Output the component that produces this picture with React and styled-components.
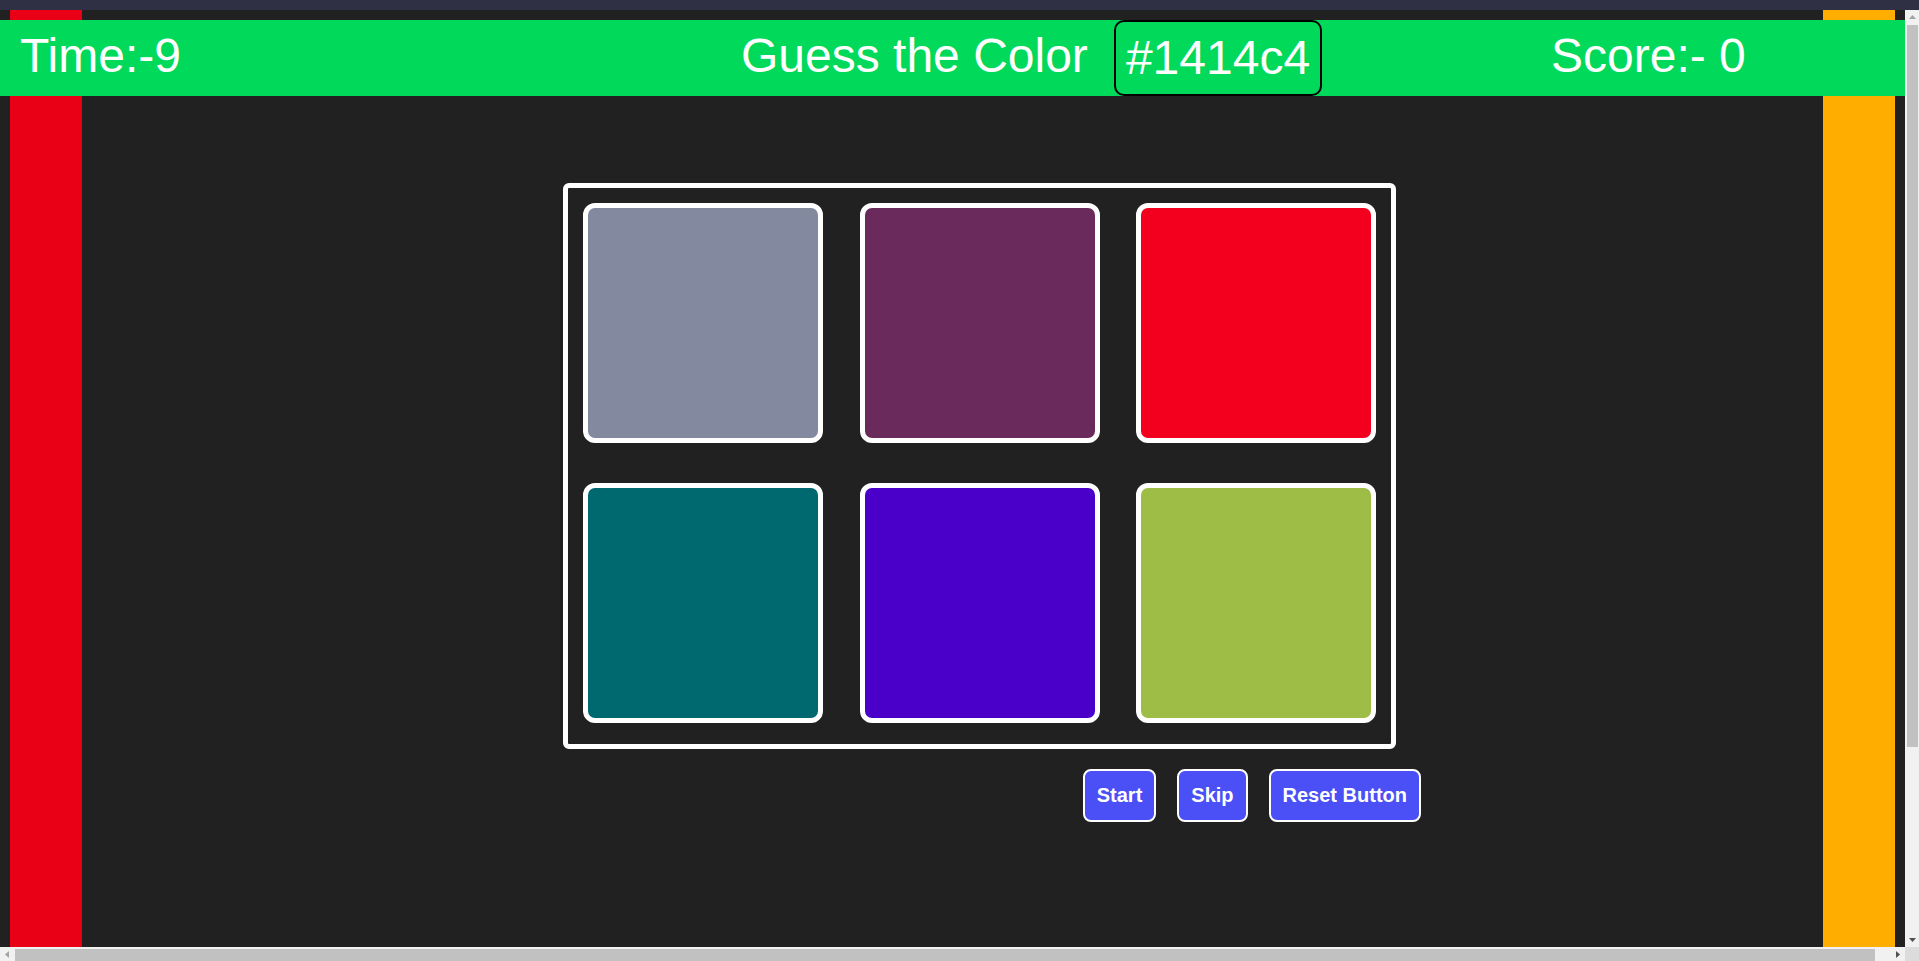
import React from 'react'
import styled, { createGlobalStyle } from 'styled-components'

const COLORS = {
  chrome: '#2f3044',
  background: '#212121',
  left: '#e90017',
  right: '#ffae00',
  header: '#00d95a',
  button: '#4a4ff6',
  track: '#f1f1f1',
  thumb: '#c1c1c1',
  corner: '#dcdcdc'
}

const TILES = ['#838aa0', '#6a2b5c', '#f4001f', '#006970', '#4a00c8', '#9ebd46']

const ARROWS = {
  up: '0,4 3.5,0 7,4',
  down: '0,0 7,0 3.5,4',
  left: '4,0 4,7 0,3.5',
  right: '0,0 0,7 4,3.5'
}

const GlobalStyle = createGlobalStyle`
  html,
  body {
    margin: 0;
    padding: 0;
    height: 100%;
    overflow: hidden;
    background: ${COLORS.background};
    font-family: 'Liberation Sans', Arial, sans-serif;
  }
`

const Arrow = ({ dir, active }) => {
  const flat = dir === 'up' || dir === 'down'
  return (
    <ArrowButton>
      <svg width={flat ? 7 : 4} height={flat ? 4 : 7} viewBox={flat ? '0 0 7 4' : '0 0 4 7'}>
        <polygon points={ARROWS[dir]} fill={active ? '#505050' : '#a3a3a3'} />
      </svg>
    </ArrowButton>
  )
}

const App = () => {
  return (
    <>
      <GlobalStyle />
      <TopStrip />
      <Frame>
        <Content>
          <Page>
            <SideBar $color={COLORS.left} />
            <Main>
              <Stage>
                <Board>
                  {TILES.map((color) => (
                    <Tile key={color} $color={color} />
                  ))}
                </Board>
                <Controls>
                  <Button>Start</Button>
                  <Button>Skip</Button>
                  <Button>Reset Button</Button>
                </Controls>
              </Stage>
            </Main>
            <SideBar $color={COLORS.right} />
            <Header>
              <Stat $width="721px">Time:-9</Stat>
              <Stat $width="373px">Guess the Color</Stat>
              <CodeBox>#1414c4</CodeBox>
              <Stat $offset="229px">Score:- 0</Stat>
            </Header>
          </Page>
        </Content>
        <ScrollBar $vertical>
          <Arrow dir="up" />
          <Track $vertical>
            <Thumb $vertical $size="722px" />
          </Track>
          <Arrow dir="down" active />
        </ScrollBar>
        <ScrollBar>
          <Arrow dir="left" />
          <Track>
            <Thumb $size="1860px" />
          </Track>
          <Arrow dir="right" active />
        </ScrollBar>
        <Corner />
      </Frame>
    </>
  )
}

const TopStrip = styled.div`
  height: 10px;
  background: ${COLORS.chrome};
`

const Frame = styled.div`
  height: calc(100vh - 10px);
  display: grid;
  grid-template-columns: 1fr 14px;
  grid-template-rows: 1fr 14px;
  background: ${COLORS.background};
`

const Content = styled.div`
  overflow: hidden;
  min-width: 0;
  min-height: 0;
`

const ScrollBar = styled.div`
  display: flex;
  flex-direction: ${(p) => (p.$vertical ? 'column' : 'row')};
  background: ${COLORS.track};
`

const ArrowButton = styled.div`
  width: 14px;
  height: 14px;
  flex-shrink: 0;
  display: flex;
  align-items: center;
  justify-content: center;

  svg {
    display: block;
  }
`

const Track = styled.div`
  flex: 1;
  display: flex;
  flex-direction: ${(p) => (p.$vertical ? 'column' : 'row')};
  padding: ${(p) => (p.$vertical ? '1px 1px 0 2px' : '2px 0 0 1px')};
`

const Thumb = styled.div`
  background: ${COLORS.thumb};
  ${(p) => (p.$vertical ? `height: ${p.$size};` : `width: ${p.$size};`)}
`

const Corner = styled.div`
  background: ${COLORS.corner};
`

const Page = styled.div`
  position: relative;
  width: 1919px;
  min-height: 1175px;
  display: flex;
  padding: 0 24px 0 10px;
  box-sizing: border-box;
`

const SideBar = styled.div`
  width: 72px;
  flex-shrink: 0;
  background: ${(p) => p.$color};
`

const Main = styled.div`
  flex: 1;
  padding: 173px 0 0 481px;
`

const Stage = styled.div`
  width: 858px;
  display: flex;
  flex-direction: column;
  gap: 20px;
`

const Board = styled.div`
  width: 833px;
  box-sizing: border-box;
  display: grid;
  grid-template-columns: repeat(3, 240px);
  column-gap: 36.5px;
  row-gap: 39.5px;
  padding: 15px 15px 21px;
  border: 5px solid #fff;
  border-radius: 6px;
`

const Tile = styled.div`
  width: 240px;
  height: 240px;
  box-sizing: border-box;
  border: 5px solid #fff;
  border-radius: 12px;
  background: ${(p) => p.$color};
  cursor: pointer;
`

const Controls = styled.div`
  display: flex;
  justify-content: flex-end;
  gap: 21px;
`

const Button = styled.button`
  background: ${COLORS.button};
  color: #fff;
  border: 2px solid #fff;
  border-radius: 8px;
  padding: 13px 12px;
  font-family: 'Liberation Sans', Arial, sans-serif;
  font-size: 20px;
  font-weight: 700;
  line-height: 23px;
  cursor: pointer;
`

const Header = styled.div`
  position: absolute;
  top: 10px;
  left: 0;
  right: 0;
  height: 76px;
  display: flex;
  align-items: flex-start;
  padding-left: 20px;
  background: ${COLORS.header};
  color: #fff;
  font-size: 48px;
`

const Stat = styled.div`
  width: ${(p) => p.$width || 'auto'};
  margin-left: ${(p) => p.$offset || '0'};
  line-height: 71px;
  white-space: nowrap;
`

const CodeBox = styled.div`
  width: 208px;
  height: 76px;
  box-sizing: border-box;
  border: 2px solid #000;
  border-radius: 10px;
  text-align: center;
  line-height: 72px;
`

export default App
